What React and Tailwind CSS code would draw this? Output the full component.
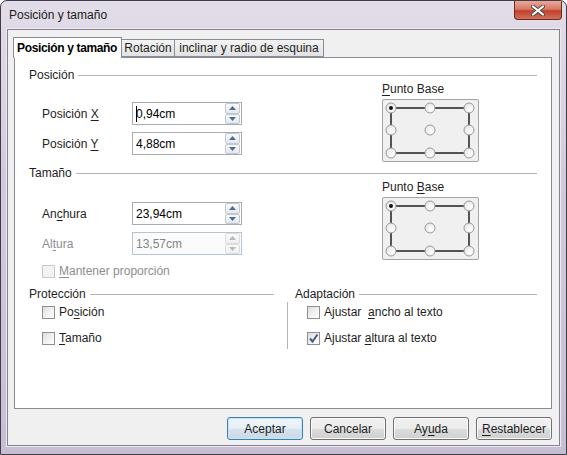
import React from "react";

const FONT = "font-['Liberation_Sans',Arial,sans-serif]";

function U({ children }) {
  return <span className="underline underline-offset-[2px]">{children}</span>;
}

function GroupHeader({ children, className = "" }) {
  return (
    <div className={`flex items-center gap-[4px] h-[14px] leading-[14px] ${className}`}>
      <span className="text-[#1e1e1e] whitespace-nowrap">{children}</span>
      <div className="flex-1 h-px bg-[#b4b4b4]" />
    </div>
  );
}

function Spin({ disabled }) {
  const half = `flex-1 flex items-center justify-center rounded-[2px] border ${
    disabled
      ? "border-[#dcdcdc] bg-[linear-gradient(#fafafa,#efefef)]"
      : "border-[#c3c8d0] bg-[linear-gradient(#f8f9fb,#e4e8ee)]"
  }`;
  const fill = disabled ? "#b8b8b8" : "#4e6a96";
  return (
    <div className="flex flex-col w-[15px] h-[21px] gap-0">
      <div className={half}>
        <svg width="7" height="4" viewBox="0 0 7 4">
          <path d="M0 4 L3.5 0 L7 4 Z" fill={fill} />
        </svg>
      </div>
      <div className={half}>
        <svg width="7" height="4" viewBox="0 0 7 4">
          <path d="M0 0 L3.5 4 L7 0 Z" fill={fill} />
        </svg>
      </div>
    </div>
  );
}

function Field({ label, value, disabled, caret }) {
  return (
    <div className="flex items-center h-[23px]">
      <div className={`w-[90px] ${disabled ? "text-[#8d8d8d]" : "text-[#1e1e1e]"}`}>{label}</div>
      <div
        className={`w-[110px] h-[23px] border flex items-center justify-between pl-[3px] pr-px ${
          disabled ? "border-[#b5c4d6] bg-[#fbfbfb] text-[#858585]" : "border-[#a7abb2] bg-white text-black"
        }`}
      >
        <span className="relative">
          {caret && <span className="absolute left-0 top-[1px] bottom-[1px] w-px bg-black" />}
          {value}
        </span>
        <Spin disabled={disabled} />
      </div>
    </div>
  );
}

function Check({ checked, disabled, children }) {
  return (
    <div className="flex items-center gap-[4px] h-[16px]">
      <div
        className={`w-[13px] h-[13px] border flex items-center justify-center ${
          disabled
            ? "border-[#c9c9c9] bg-[#f3f3f3]"
            : "border-[#8e8f8f] bg-[linear-gradient(135deg,#dcdcdc,#f4f4f4_60%,#ffffff)]"
        }`}
      >
        {checked && (
          <svg width="11" height="11" viewBox="0 0 11 11">
            <path d="M2 5.5 L4.5 8.5 L9.5 1.5" fill="none" stroke="#4a5a8e" strokeWidth="2" />
          </svg>
        )}
      </div>
      <span className={disabled ? "text-[#8d8d8d]" : "text-[#1e1e1e]"}>{children}</span>
    </div>
  );
}

function BasePoint() {
  const xs = [9, 48, 87];
  const ys = [9, 31, 54];
  return (
    <div className="w-[97px] h-[63px] border border-[#a4a4a4] rounded-[2px] bg-[#f0f0f0]">
      <svg width="95" height="61" viewBox="1 1 95 61">
        <rect x="9" y="9" width="78" height="45" fill="none" stroke="#000" strokeWidth="1.3" />
        <defs>
          <radialGradient id="rg" cx="0.65" cy="0.65" r="0.7">
            <stop offset="0" stopColor="#ffffff" />
            <stop offset="1" stopColor="#e6e6e6" />
          </radialGradient>
        </defs>
        {ys.map((y) =>
          xs.map((x) => (
            <g key={`${x}-${y}`}>
              <circle cx={x} cy={y} r="5" fill="url(#rg)" stroke="#9a9a9a" strokeWidth="1" />
              {x === 9 && y === 9 && <circle cx={x} cy={y} r="2" fill="#111" />}
            </g>
          ))
        )}
      </svg>
    </div>
  );
}

function Button({ children, primary }) {
  return (
    <div
      className={`w-[76px] h-[23px] rounded-[3px] border flex items-center justify-center text-[#1e1e1e] ${
        primary
          ? "border-[#3c7fb1] bg-[linear-gradient(#f0f6fb_0%,#e6eef5_50%,#d6e2ec_51%,#cbd9e6_100%)] shadow-[inset_0_0_0_1px_#c4e5f6]"
          : "border-[#707070] bg-[linear-gradient(#f2f2f2_0%,#ebebeb_50%,#dddddd_51%,#cfcfcf_100%)] shadow-[inset_0_0_0_1px_#fbfbfb]"
      }`}
    >
      {children}
    </div>
  );
}

export default function App() {
  return (
    <div
      className={`${FONT} text-[12px] w-[567px] h-[455px] flex flex-col border border-[#3e3c48] rounded-t-[7px] overflow-hidden bg-[linear-gradient(180deg,#e2dde8_0%,#d2cadc_40%,#c7bed4_100%)]`}
    >
      {/* title bar */}
      <div className="h-[28px] flex justify-between items-start">
        <div className="pl-[8px] pt-[7px] text-[#1a1a1a] leading-[14px]">Posición y tamaño</div>
        <div className="mr-[4px] w-[48px] h-[19px] rounded-b-[4px] border border-t-0 border-[#6e2a1f] bg-[linear-gradient(#e9a898_0%,#d77a66_45%,#c1412c_55%,#d0705a_100%)] flex items-center justify-center">
          <svg width="14" height="11" viewBox="0 0 14 11">
            <path
              d="M2 1.5 L12 9.5 M12 1.5 L2 9.5"
              stroke="#4a4a4a"
              strokeWidth="4"
              strokeLinecap="round"
            />
            <path
              d="M2 1.5 L12 9.5 M12 1.5 L2 9.5"
              stroke="#ffffff"
              strokeWidth="2.2"
              strokeLinecap="round"
            />
          </svg>
        </div>
      </div>

      {/* client area */}
      <div className="mx-[6px] h-[417px] border border-[#85818f] shadow-[0_0_0_1px_#eee9f3] bg-[#f0f0f0] pl-[6px] pt-[6px] flex flex-col">
        {/* tabs */}
        <div className="flex items-end h-[21px] relative z-10">
          <div className="ml-[-1px] w-[109px] h-[21px] mb-[-1px] border border-b-0 border-[#898c95] bg-white font-bold text-black pl-[3px] pt-[3px] leading-[14px] whitespace-nowrap tracking-[-0.35px]">
            Posición y tamaño
          </div>
          <div className="w-[53px] h-[18px] border border-l-0 border-[#898c95] bg-[linear-gradient(#f3f3f3,#e2e2e2)] flex items-center justify-center text-[#1e1e1e]">
            Rotación
          </div>
          <div className="w-[149px] h-[18px] border border-l-0 border-[#898c95] bg-[linear-gradient(#f3f3f3,#e2e2e2)] flex items-center justify-center text-[#1e1e1e]">
            inclinar y radio de esquina
          </div>
        </div>

        {/* panel */}
        <div className="w-[538px] h-[352px] border border-[#898c95] bg-white px-[14px] flex flex-col">
          <GroupHeader className="mt-[10px]">Posición</GroupHeader>
          <div className="flex">
            <div className="w-[353px] pl-[13px] pt-[20px] flex flex-col gap-[7px]">
              <Field label={<>Posición <U>X</U></>} value="0,94cm" caret />
              <Field label={<>Posición <U>Y</U></>} value="4,88cm" />
            </div>
            <div className="flex flex-col">
              <div className="leading-[14px] h-[14px] text-[#1e1e1e]">
                <U>P</U>unto Base
              </div>
              <div className="mt-[3px]">
                <BasePoint />
              </div>
            </div>
          </div>

          <GroupHeader className="mt-[4px]">Tamaño</GroupHeader>
          <div className="flex">
            <div className="w-[353px] pl-[13px] pt-[22px] flex flex-col">
              <Field label={<>An<U>c</U>hura</>} value="23,94cm" />
              <div className="mt-[7px]">
                <Field label={<>Al<U>t</U>ura</>} value="13,57cm" disabled />
              </div>
              <div className="mt-[8px]">
                <Check disabled>
                  <U>M</U>antener proporción
                </Check>
              </div>
            </div>
            <div className="flex flex-col">
              <div className="leading-[14px] h-[14px] text-[#1e1e1e]">
                Punto <U>B</U>ase
              </div>
              <div className="mt-[3px]">
                <BasePoint />
              </div>
            </div>
          </div>

          <div className="flex mt-[8px]">
            <div className="w-[258px] pr-[13px] flex flex-col">
              <GroupHeader>Protección</GroupHeader>
              <div className="pl-[13px] pt-[3px] flex flex-col gap-[10px]">
                <Check>
                  Po<U>s</U>ición
                </Check>
                <Check>
                  <U>T</U>amaño
                </Check>
              </div>
            </div>
            <div className="flex-1 flex flex-col">
              <GroupHeader className="pl-[8px]">Adaptación</GroupHeader>
              <div className="mt-[1px] h-[47px] border-l border-[#b4b4b4] pl-[19px] pt-[2px] flex flex-col gap-[10px]">
                <Check>
                  Ajustar&nbsp; <U>a</U>ncho al texto
                </Check>
                <Check checked>
                  Ajustar <U>a</U>ltura al texto
                </Check>
              </div>
            </div>
          </div>
        </div>

        {/* buttons */}
        <div className="w-[538px] mt-[8px] flex justify-end gap-[7px]">
          <Button primary>Aceptar</Button>
          <Button>Cancelar</Button>
          <Button>
            Ay<U>u</U>da
          </Button>
          <Button>
            <U>R</U>establecer
          </Button>
        </div>
      </div>
    </div>
  );
}
